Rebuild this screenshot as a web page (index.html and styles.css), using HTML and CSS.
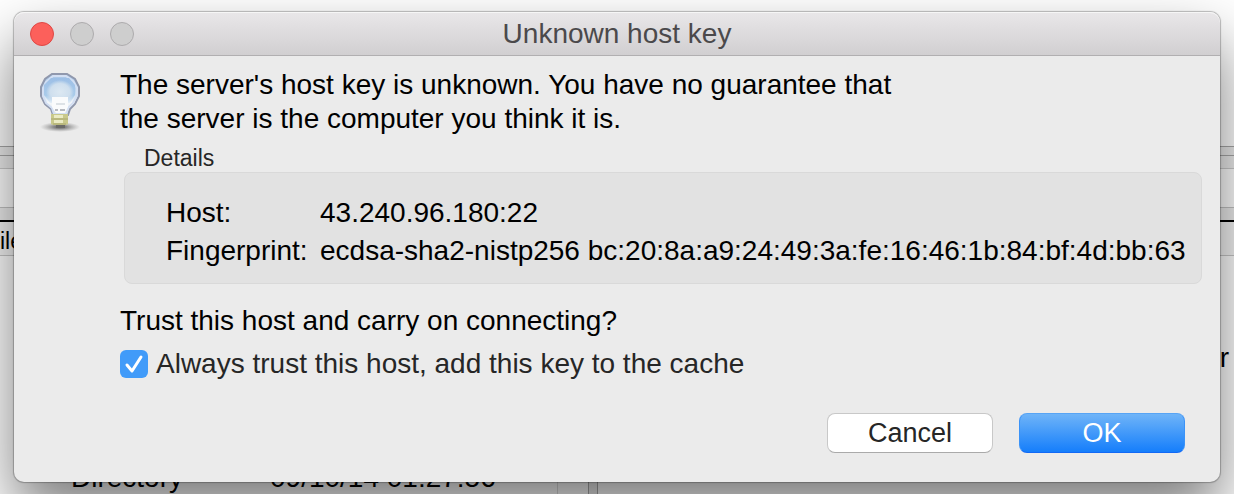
FILE: index.html
```
<!DOCTYPE html>
<html lang="en">
<head>
<meta charset="utf-8">
<title>Unknown host key</title>
<link rel="stylesheet" href="styles.css">
</head>
<body>
<div class="desktop">
  <div class="browser">
    <div class="log"></div>
    <div class="splitter"></div>
    <div class="strip"></div>
    <div class="path"></div>
    <div class="band"></div>
    <div class="columns">ile</div>
    <div class="files">
      <div class="pane local"><span class="type">Directory</span><span>09/10/14 01:27:56</span></div>
      <div class="scroll"></div>
      <div class="gutter"></div>
      <div class="pane remote">r</div>
    </div>
  </div>

  <section class="dialog" role="dialog" aria-labelledby="title">
    <header class="titlebar">
      <div class="lights">
        <button class="light close" aria-label="Close"></button>
        <button class="light" aria-label="Minimize" disabled></button>
        <button class="light" aria-label="Zoom" disabled></button>
      </div>
      <h1 class="title" id="title">Unknown host key</h1>
    </header>
    <div class="body">
      <svg class="bulb" viewBox="0 0 48 64" aria-hidden="true">
        <defs>
          <linearGradient id="glass" x1="0" y1="0" x2="0" y2="1">
            <stop offset="0" stop-color="#a6c4e6"/>
            <stop offset=".45" stop-color="#c3d9ee"/>
            <stop offset=".7" stop-color="#f4f7fa"/>
            <stop offset="1" stop-color="#e2e5e8"/>
          </linearGradient>
          <linearGradient id="sky" x1="0" y1="0" x2="0" y2="1">
            <stop offset="0" stop-color="#9dbfe6"/>
            <stop offset=".7" stop-color="#a9cbea"/>
            <stop offset="1" stop-color="#e6eff7"/>
          </linearGradient>
          <radialGradient id="glow">
            <stop offset="0" stop-color="#dce8f2"/>
            <stop offset=".7" stop-color="#cfdfee"/>
            <stop offset="1" stop-color="#cfdfee" stop-opacity="0"/>
          </radialGradient>
          <radialGradient id="shade">
            <stop offset="0" stop-color="#555"/>
            <stop offset=".35" stop-color="#777" stop-opacity=".8"/>
            <stop offset="1" stop-color="#999" stop-opacity="0"/>
          </radialGradient>
        </defs>
        <ellipse cx="24" cy="57" rx="20" ry="5" fill="url(#shade)"/>
        <path d="M16 4h15l8 5 4 8v9l-4 8-5 5-2 6H17l-2-6-6-5-4-8v-9l4-8z" fill="url(#glass)" stroke="#9098ad" stroke-width="2"/>
        <path d="M17 6h13l7 5 4 7v7l-4 8-5 5-2 6H18l-2-6-6-5-3-7v-7l3-7z" fill="none" stroke="#d3dff3" stroke-width="2"/>
        <path d="M15 8h18l6 7v10l-5 8H14l-6-8V15z" fill="url(#sky)"/>
        <ellipse cx="24" cy="22" rx="14" ry="12" fill="url(#glow)"/>
        <path d="M16 27h16v10l-3 6h-9l-4-6z" fill="#fafbfc"/>
        <path d="M20 34h9" stroke="#dde2e6" stroke-width="2"/>
        <path d="M19 40h3m2 0h5" stroke="#b7bac0" stroke-width="2"/>
        <path d="M15 44h17v10l-2 1H17l-2-1z" fill="#c9c98b"/>
        <path d="M18 45h9v3h-9zM18 50h9v3h-9z" fill="#ebebc4"/>
        <path d="M15 49h17M17 54h13" stroke="#aaa870" stroke-width="1"/>
        <path d="M20 55h9v3h-9z" fill="#6b6b68"/>
      </svg>
      <div class="content">
        <p class="message">The server's host key is unknown. You have no guarantee that<br>the server is the computer you think it is.</p>
        <h2 class="legend">Details</h2>
        <dl class="details">
          <dt>Host:</dt><dd>43.240.96.180:22</dd>
          <dt>Fingerprint:</dt><dd>ecdsa-sha2-nistp256 bc:20:8a:a9:24:49:3a:fe:16:46:1b:84:bf:4d:bb:63</dd>
        </dl>
        <p class="question">Trust this host and carry on connecting?</p>
        <div class="option">
          <span class="tick">
            <input type="checkbox" id="always" checked>
            <svg viewBox="0 0 28 28" aria-hidden="true"><path d="M7 15l5 6 9-14" fill="none" stroke="#fff" stroke-width="3" stroke-linecap="round" stroke-linejoin="round"/></svg>
          </span>
          <label for="always">Always trust this host, add this key to the cache</label>
        </div>
        <div class="actions">
          <button class="button">Cancel</button>
          <button class="button primary">OK</button>
        </div>
      </div>
    </div>
  </section>
</div>
</body>
</html>
```
FILE: styles.css
```
* { box-sizing: border-box; }
body {
  margin: 0;
  font-family: "Liberation Sans", Arial, sans-serif;
  font-size: 28px;
  color: #000;
}
h1, h2, p, dl, dd { margin: 0; font-weight: normal; }

.desktop {
  display: grid;
  grid-template-columns: minmax(0, 1fr);
  min-height: 100vh;
  overflow: hidden;
}
.browser, .dialog { grid-area: 1 / 1; }

.browser { display: flex; flex-direction: column; background: #fff; }
.log { height: 146px; }
.splitter { height: 10px; background: #ededed; border: solid #a8a8a8; border-width: 1px 0; }
.strip { height: 13px; background: #eee; border-bottom: 1px solid #ccc; }
.path { height: 39px; border-bottom: 1px solid #c4c4c4; }
.band { height: 14px; background: #eee; border-bottom: 2px solid #000; }
.columns {
  height: 34px;
  line-height: 38px;
  font-size: 23px;
  background: #f6f6f6;
  border-bottom: 1px solid #c8c8c8;
}
.files { flex: 1; display: flex; }
.pane { display: flex; }
.local { width: 557px; align-items: flex-end; line-height: 32px; white-space: nowrap; }
.type { width: 199px; margin-left: 71px; }
.scroll { width: 31px; border-left: 1px solid #ddd; }
.gutter { width: 10px; background: #eee; border: solid #aaa; border-width: 0 1px; }
.remote { flex: 1; justify-content: flex-end; padding: 87px 5px 0 0; line-height: 30px; }

.dialog {
  margin: 12px 14px;
  border-radius: 10px;
  background: #ebebeb;
  box-shadow: 0 0 1px 1px rgba(0, 0, 0, .25), 0 30px 60px rgba(0, 0, 0, .52);
}
.titlebar {
  display: grid;
  grid-template-columns: 1fr auto 1fr;
  align-items: center;
  height: 44px;
  padding: 0 16px;
  border-radius: 10px 10px 0 0;
  border-bottom: 1px solid #b1afb1;
  background: linear-gradient(#e9e7e9, #d1cfd1);
  box-shadow: inset 0 1px #f6f6f6;
}
.lights { display: flex; gap: 16px; }
.light {
  width: 24px;
  height: 24px;
  padding: 0;
  border: 1px solid #adabad;
  border-radius: 50%;
  background: #cecece;
}
.close { background: #fc605b; border-color: #df4744; }
.title { font-size: 28px; line-height: 30px; color: #4b494b; }

.body { display: flex; padding: 12px 18px 29px 22px; }
.bulb { flex: none; width: 48px; height: 64px; margin-top: 2px; }
.content { flex: 1; min-width: 0; padding-left: 36px; }
.message { line-height: 34px; white-space: nowrap; }
.legend { margin: 9px 0 1px 24px; font-size: 23px; line-height: 26px; color: #262626; }
.details {
  display: grid;
  grid-template-columns: 154px 1fr;
  margin-left: 4px;
  padding: 21px 0 13px 41px;
  line-height: 38px;
  white-space: nowrap;
  background: #e2e2e2;
  border: 1px solid #d9d9d9;
  border-radius: 8px;
}
.question { margin-top: 22px; line-height: 30px; }
.option { display: flex; align-items: center; gap: 8px; margin-top: 13px; line-height: 30px; color: #262626; }
.tick { display: grid; width: 28px; height: 28px; }
.tick > * { grid-area: 1 / 1; }
.tick input { appearance: none; width: 28px; height: 28px; margin: 0; border-radius: 6px; background: #419bf9; }
.tick svg { pointer-events: none; }
.actions { display: flex; justify-content: flex-end; gap: 26px; margin-top: 34px; padding-right: 17px; }
.button {
  width: 166px;
  height: 40px;
  padding: 0;
  font: inherit;
  font-size: 27px;
  line-height: 36px;
  color: #262626;
  background: #fff;
  border: 1px solid #c8c8c8;
  border-bottom-color: #aaa;
  border-radius: 8px;
}
.primary {
  color: #fff;
  background: linear-gradient(#6fb4f8, #157efb);
  border-color: #57a4f5 #3b93f8 #1269f5;
}
```
